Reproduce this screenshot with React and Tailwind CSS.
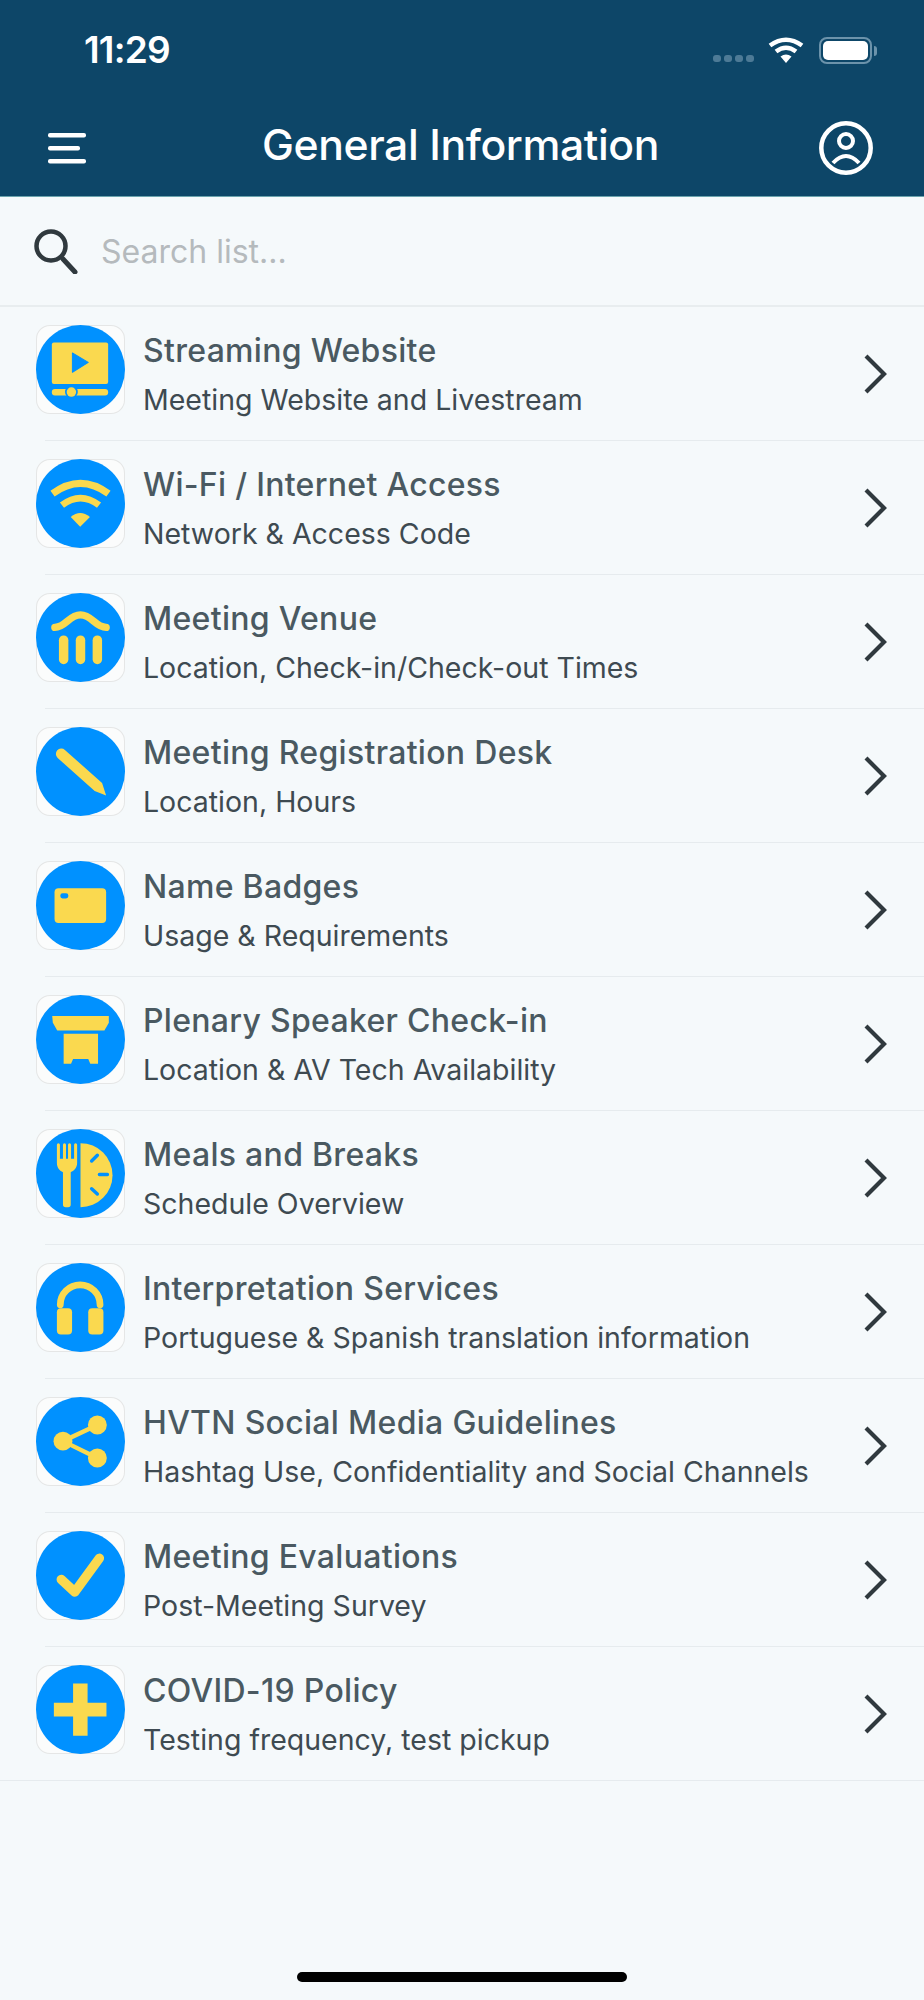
import React from "react";

const BLUE = "#0091ff";
const YELLOW = "#fad94f";

const IconFrame = ({ children }) => (
  <svg width="89" height="89" viewBox="0 0 264 264" className="shrink-0">
    <rect x="1.5" y="1.5" width="261" height="261" rx="40" fill="#fbfcfc" stroke="#e5e6e6" strokeWidth="3" />
    <circle cx="132" cy="132" r="132" fill={BLUE} />
    {children}
  </svg>
);

const StreamIcon = () => (
  <IconFrame>
    <rect x="47" y="52" width="167" height="123" rx="6" fill={YELLOW} />
    <path d="M108 83 L155 111 L108 140 Z" fill={BLUE} stroke={BLUE} strokeWidth="3" strokeLinejoin="round" />
    <rect x="47" y="190" width="167" height="19" rx="9" fill={YELLOW} />
    <circle cx="105" cy="199" r="19" fill={BLUE} />
    <circle cx="105" cy="199" r="14" fill={YELLOW} />
  </IconFrame>
);

const WifiIcon = () => (
  <IconFrame>
    <path d="M49 103 Q132 42 215 103" fill="none" stroke={YELLOW} strokeWidth="21" />
    <path d="M77 137 Q132 95 187 137" fill="none" stroke={YELLOW} strokeWidth="20" />
    <path d="M103 172 Q131 148 160 172 L131 201 Z" fill={YELLOW} />
  </IconFrame>
);

const VenueIcon = () => (
  <IconFrame>
    <path d="M56 102 C88 102 98 65 132 65 C166 65 176 102 208 102" fill="none" stroke={YELLOW} strokeWidth="22" strokeLinecap="round" />
    <rect x="68" y="126" width="28" height="85" rx="14" fill={YELLOW} />
    <rect x="118" y="126" width="28" height="85" rx="14" fill={YELLOW} />
    <rect x="168" y="126" width="28" height="85" rx="14" fill={YELLOW} />
  </IconFrame>
);

const PencilIcon = () => (
  <IconFrame>
    <path d="M64.3 91.9 A16 16 0 0 1 85.7 68.1 L196 166 L208 203 L174 190 Z" fill={YELLOW} />
  </IconFrame>
);

const BadgeIcon = () => (
  <IconFrame>
    <rect x="55" y="81" width="153" height="103" rx="12" fill={YELLOW} />
    <rect x="72" y="96" width="24" height="15" rx="7" fill={BLUE} />
  </IconFrame>
);

const PodiumIcon = () => (
  <IconFrame>
    <path d="M48 62 H216 V82 L203 105 H63 L50 82 Z" fill={YELLOW} />
    <path d="M82 115 H184 V204 H161 L155 190 H110 L104 204 H82 Z" fill={YELLOW} />
  </IconFrame>
);

const MealsIcon = () => (
  <IconFrame>
    <path d="M62 47 a4.5 4.5 0 0 1 9 0 V88 H80 V47 a4.5 4.5 0 0 1 9 0 V88 H95 V47 a4.5 4.5 0 0 1 9 0 V88 H113 V47 a4.5 4.5 0 0 1 9 0 V100 C122 116 112 124 103 128 V224 a8 8 0 0 1 -8 8 H88 a8 8 0 0 1 -8 -8 V128 C71 124 62 116 62 100 Z" fill={YELLOW} />
    <path d="M132 42 A95 95 0 0 1 132 232 Z" fill={YELLOW} />
    <path d="M182 78 L165 95 M188 135 H212 M165 177 L182 193" stroke={BLUE} strokeWidth="10" strokeLinecap="round" />
  </IconFrame>
);

const HeadphonesIcon = () => (
  <IconFrame>
    <path d="M72 124 A59 59 0 0 1 190 124" fill="none" stroke={YELLOW} strokeWidth="20" strokeLinecap="round" />
    <rect x="62" y="134" width="45" height="78" rx="12" fill={YELLOW} />
    <rect x="155" y="134" width="45" height="78" rx="12" fill={YELLOW} />
  </IconFrame>
);

const ShareIcon = () => (
  <IconFrame>
    <path d="M182 83 L80 131 L182 181" fill="none" stroke={YELLOW} strokeWidth="13" />
    <circle cx="182" cy="83" r="28" fill={YELLOW} />
    <circle cx="80" cy="131" r="28" fill={YELLOW} />
    <circle cx="182" cy="181" r="28" fill={YELLOW} />
  </IconFrame>
);

const CheckIcon = () => (
  <IconFrame>
    <path d="M75 144 L115 181 L188 81" fill="none" stroke={YELLOW} strokeWidth="28" strokeLinecap="round" strokeLinejoin="round" />
  </IconFrame>
);

const PlusIcon = () => (
  <IconFrame>
    <path d="M110 55 H153 V112 H209 V153 H153 V210 H110 V153 H53 V112 H110 Z" fill={YELLOW} />
  </IconFrame>
);

const items = [
  { title: "Streaming Website", sub: "Meeting Website and Livestream", Icon: StreamIcon },
  { title: "Wi-Fi / Internet Access", sub: "Network & Access Code", Icon: WifiIcon },
  { title: "Meeting Venue", sub: "Location, Check-in/Check-out Times", Icon: VenueIcon },
  { title: "Meeting Registration Desk", sub: "Location, Hours", Icon: PencilIcon },
  { title: "Name Badges", sub: "Usage & Requirements", Icon: BadgeIcon },
  { title: "Plenary Speaker Check-in", sub: "Location & AV Tech Availability", Icon: PodiumIcon },
  { title: "Meals and Breaks", sub: "Schedule Overview", Icon: MealsIcon },
  { title: "Interpretation Services", sub: "Portuguese & Spanish translation information", Icon: HeadphonesIcon },
  { title: "HVTN Social Media Guidelines", sub: "Hashtag Use, Confidentiality and Social Channels", Icon: ShareIcon },
  { title: "Meeting Evaluations", sub: "Post-Meeting Survey", Icon: CheckIcon },
  { title: "COVID-19 Policy", sub: "Testing frequency, test pickup", Icon: PlusIcon },
];

const StatusBar = () => (
  <div className="flex h-[90px] items-start justify-between pl-[84px] pr-[47px] pt-[29px]">
    <span className="text-[37px] font-semibold leading-[42px] tracking-[-0.8px] text-white">11:29</span>
    <div className="flex items-start pt-[8px]">
      <div className="mr-[14px] mt-[18px] flex gap-[3px]">
        <div className="h-[7px] w-[8px] rounded-[3px] bg-[#4d7a96]" />
        <div className="h-[7px] w-[8px] rounded-[3px] bg-[#4d7a96]" />
        <div className="h-[7px] w-[8px] rounded-[3px] bg-[#4d7a96]" />
        <div className="h-[7px] w-[8px] rounded-[3px] bg-[#4d7a96]" />
      </div>
      <svg width="36" height="26" viewBox="0 0 36 26" className="mr-[15px]">
        <path d="M2 8.5 Q18 -3 34 8.5" fill="none" stroke="#fff" strokeWidth="4.5" />
        <path d="M8 14.5 Q18 7 28 14.5" fill="none" stroke="#fff" strokeWidth="4.5" />
        <path d="M12.5 19.5 Q18 15.5 23.5 19.5 L18 26 Z" fill="#fff" />
      </svg>
      <div className="flex items-center">
        <div className="h-[27px] w-[53px] rounded-[8px] border-2 border-[#6c93ab] p-[2px]">
          <div className="h-full w-full rounded-[5px] bg-white" />
        </div>
        <div className="ml-[2px] h-[10px] w-[3px] rounded-r-[3px] bg-[#6c93ab]" />
      </div>
    </div>
  </div>
);

const NavBar = () => (
  <div className="flex h-[106px] items-start pl-[48px] pr-[51px] pt-[23px]">
    <div className="w-[54px]">
      <svg width="38" height="32" viewBox="0 0 38 32" className="mt-[20px]">
        <rect x="0" y="0" width="38" height="4.5" rx="2" fill="#fff" />
        <rect x="0" y="13" width="32" height="4.5" rx="2" fill="#fff" />
        <rect x="0" y="26" width="38" height="4.5" rx="2" fill="#fff" />
      </svg>
    </div>
    <h1 className="flex-1 text-center text-[42.7px] font-medium leading-[64px] tracking-[-0.4px] text-white">General Information</h1>
    <svg width="54" height="54" viewBox="0 0 54 54" fill="none" stroke="#fff" strokeWidth="4.5" className="mt-[8px]">
      <circle cx="27" cy="27" r="24.7" />
      <circle cx="27" cy="20" r="7" strokeWidth="4" />
      <path d="M14 42 Q27 28 40 42" strokeWidth="4" />
    </svg>
  </div>
);

const SearchBar = () => (
  <div className="flex h-[110px] items-center border-b-2 border-[#e8edef] pl-[34px] pt-[1px]">
    <svg width="44" height="46" viewBox="0 0 44 46" fill="none" stroke="#30393e" className="mb-[1px]">
      <circle cx="17" cy="18" r="14.5" strokeWidth="4.5" />
      <path d="M29 31 L41 44" strokeWidth="5" strokeLinecap="round" />
    </svg>
    <span className="ml-[23px] text-[32px] leading-none text-[#b5babd]">Search list...</span>
  </div>
);

const Row = ({ item, last }) => {
  const Icon = item.Icon;
  return (
    <div>
      <div className="flex h-[133px] items-start pl-[36px] pr-[36px] pt-[18px]">
        <Icon />
        <div className="ml-[18px] mt-[6px] flex-1">
          <div className="text-[32px] font-medium leading-[40px] tracking-[0.3px] text-[#4a5961]">{item.title}</div>
          <div className="mt-[9px] text-[28.5px] leading-[40px] text-[#3e4a51]">{item.sub}</div>
        </div>
        <svg width="26" height="42" viewBox="0 0 26 42" fill="none" className="mt-[28px]">
          <path d="M4 3 L22 21 L4 39" stroke="#30393e" strokeWidth="4.2" />
        </svg>
      </div>
      <div className={last ? "h-px bg-[#e6ebee]" : "ml-[45px] h-px bg-[#e6ebee]"} />
    </div>
  );
};

export default function App() {
  return (
    <div className="flex h-[2000px] w-[924px] flex-col overflow-hidden bg-[#f5f9fb] font-['Inter',sans-serif]">
      <div className="border-b border-[#6aa3ad] bg-[#0d4668]">
        <StatusBar />
        <NavBar />
      </div>
      <SearchBar />
      <div>
        {items.map((item, i) => (
          <Row key={item.title} item={item} last={i === items.length - 1} />
        ))}
      </div>
      <div className="mb-[18px] mt-auto h-[10px] w-[330px] self-center rounded-full bg-black" />
    </div>
  );
}
